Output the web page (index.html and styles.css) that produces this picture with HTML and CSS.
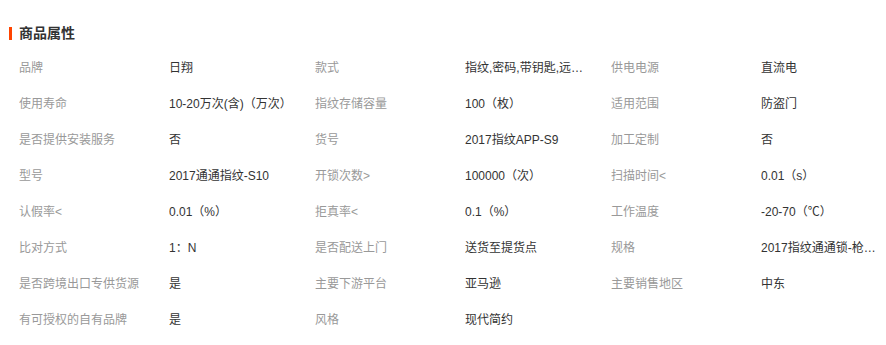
FILE: index.html
```html
<!DOCTYPE html>
<html lang="zh-CN">
<head>
<meta charset="utf-8">
<title>商品属性</title>
<link rel="stylesheet" href="styles.css">
</head>
<body>
<div class="attrs">
  <h2 class="title"><span class="bar"></span>商品属性</h2>
  <div class="grid">
    <div class="k">品牌</div><div class="v">日翔</div>
    <div class="k">款式</div><div class="v">指纹,密码,带钥匙,远程开锁,手机开锁</div>
    <div class="k">供电电源</div><div class="v">直流电</div>

    <div class="k">使用寿命</div><div class="v">10-20万次(含)（万次）</div>
    <div class="k">指纹存储容量</div><div class="v">100（枚）</div>
    <div class="k">适用范围</div><div class="v">防盗门</div>

    <div class="k">是否提供安装服务</div><div class="v">否</div>
    <div class="k">货号</div><div class="v">2017指纹APP-S9</div>
    <div class="k">加工定制</div><div class="v">否</div>

    <div class="k">型号</div><div class="v">2017通通指纹-S10</div>
    <div class="k">开锁次数&gt;</div><div class="v">100000（次）</div>
    <div class="k">扫描时间&lt;</div><div class="v">0.01（s）</div>

    <div class="k">认假率&lt;</div><div class="v">0.01（%）</div>
    <div class="k">拒真率&lt;</div><div class="v">0.1（%）</div>
    <div class="k">工作温度</div><div class="v">-20-70（℃）</div>

    <div class="k">比对方式</div><div class="v">1：N</div>
    <div class="k">是否配送上门</div><div class="v">送货至提货点</div>
    <div class="k">规格</div><div class="v">2017指纹通通锁-枪色款</div>

    <div class="k">是否跨境出口专供货源</div><div class="v">是</div>
    <div class="k">主要下游平台</div><div class="v">亚马逊</div>
    <div class="k">主要销售地区</div><div class="v">中东</div>

    <div class="k">有可授权的自有品牌</div><div class="v">是</div>
    <div class="k">风格</div><div class="v">现代简约</div>
  </div>
</div>
</body>
</html>
```

FILE: styles.css
```css
html, body {
  margin: 0;
  padding: 0;
  background: #fff;
}
body {
  font-family: "Liberation Sans", "Noto Sans CJK SC", sans-serif;
  font-size: 12px;
  color: #333;
}
.attrs {
  width: 886px;
}
.title {
  margin: 0;
  height: 50px;
  padding: 0 0 0 9px;
  display: flex;
  align-items: center;
  padding-top: 16px;
  box-sizing: border-box;
  font-size: 14px;
  font-weight: bold;
  color: #333;
  line-height: 16px;
}
.bar {
  display: inline-block;
  width: 3px;
  height: 13px;
  background: #ff4400;
  margin-right: 7px;
}
.grid {
  display: grid;
  grid-template-columns: 150px 146px 150px 146px 150px 144px;
  padding-left: 19px;
  grid-auto-rows: 36px;
}
.k, .v {
  line-height: 36px;
  white-space: nowrap;
  overflow: hidden;
  text-overflow: ellipsis;
}
.k {
  color: #999;
}
.v {
  color: #333;
  padding-right: 20px;
}
```
